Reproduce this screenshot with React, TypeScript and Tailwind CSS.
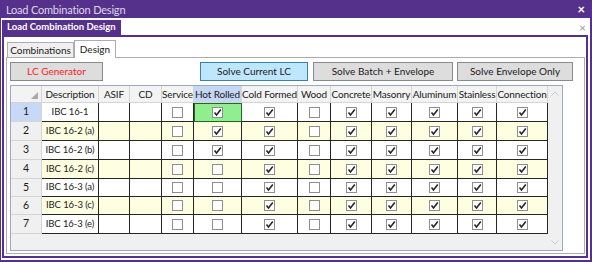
import type { FC, ReactNode } from "react";

const cols = [31, 57, 31, 32, 32, 48, 56, 33, 41, 40, 46, 39, 51];
const headers = [
  "",
  "Description",
  "ASIF",
  "CD",
  "Service",
  "Hot Rolled",
  "Cold Formed",
  "Wood",
  "Concrete",
  "Masonry",
  "Aluminum",
  "Stainless",
  "Connection"
];

interface RowData {
  desc: string;
  hotRolled: boolean;
}

const rows: RowData[] = [
  { desc: "IBC 16-1", hotRolled: true },
  { desc: "IBC 16-2 (a)", hotRolled: true },
  { desc: "IBC 16-2 (b)", hotRolled: true },
  { desc: "IBC 16-2 (c)", hotRolled: false },
  { desc: "IBC 16-3 (a)", hotRolled: false },
  { desc: "IBC 16-3 (c)", hotRolled: false },
  { desc: "IBC 16-3 (e)", hotRolled: false }
];

const rowHeights = [19, 19, 19, 19, 18, 18, 19];

const CheckBox: FC<{ checked: boolean }> = ({ checked }) => (
  <span className="w-[11px] h-[11px] border border-[#8e8e8e] bg-white flex items-center justify-center">
    {checked && (
      <svg width="9" height="9" viewBox="0 0 9 9">
        <path d="M1.5 4.5 L3.5 7 L7.8 1.5" fill="none" stroke="#262626" strokeWidth="1.6" />
      </svg>
    )}
  </span>
);

const Cell: FC<{ width: number; bg: string; children?: ReactNode; extra?: string }> = ({
  width,
  bg,
  children,
  extra = ""
}) => (
  <div
    className={`h-full flex items-center justify-center border-r border-b border-[#262626] ${bg} ${extra}`}
    style={{ width }}
  >
    {children}
  </div>
);

export default function App() {
  return (
    <div
      className="w-[592px] h-[262px] bg-white flex flex-col overflow-hidden text-[#1a1a1a]"
      style={{ fontFamily: 'Lato, "Noto Sans", sans-serif' }}
    >
      {/* title bar */}
      <div className="h-[18px] bg-[#56318b] flex items-center justify-between px-[6px] shrink-0">
        <span className="text-[11px] leading-none text-[#ddd6ea] whitespace-nowrap tracking-[-0.2px]">
          Load Combination Design
        </span>
        <span className="text-[13px] leading-none text-white font-bold mr-[1px]">×</span>
      </div>

      {/* outer frame */}
      <div className="flex-1 flex flex-col border-l border-r-2 border-b-2 border-[#56318b] pl-[1px] pr-[2px] pt-[2px] pb-[2px] min-h-0">
        {/* doc tab strip */}
        <div className="h-[15px] flex items-stretch shrink-0">
          <div className="w-[119px] bg-[#56318b] text-white font-bold text-[9.5px] flex items-center pl-[5px] whitespace-nowrap">
            Load Combination Design
          </div>
          <div className="flex-1 flex justify-end items-center pr-[2px]">
            <span className="text-[12px] text-[#9a9a9a] leading-none">×</span>
          </div>
        </div>

        {/* inner frame */}
        <div className="flex-1 border-2 border-[#56318b] flex flex-col pl-[2px] pr-[1px] pt-[3px] pb-[2px] min-h-0">
          {/* tab headers */}
          <div className="h-[17px] flex items-end shrink-0 pl-[1px] relative z-10 text-[10px]">
            <div className="h-[15px] w-[67px] border border-b-0 border-[#acacac] bg-[#f0f0f0] flex items-center justify-center whitespace-nowrap">
              Combinations
            </div>
            <div className="h-[18px] w-[42px] -mb-[1px] border border-b-0 border-[#acacac] bg-white flex items-center justify-center">
              Design
            </div>
          </div>

          {/* tab panel */}
          <div className="flex-1 border border-[#acacac] bg-white pl-[3px] pt-[4px] min-h-0 flex flex-col">
            <div className="flex h-[19px] text-[10px] shrink-0 whitespace-nowrap">
              <button className="w-[93px] border border-[#8a8a8a] bg-[#dddddd] text-[#ff1a1a] flex items-center justify-center">
                LC Generator
              </button>
              <button className="ml-[97px] w-[108px] border border-[#3c7fb1] bg-[#bee6fd] flex items-center justify-center">
                Solve Current LC
              </button>
              <button className="ml-[5px] w-[140px] border border-[#8a8a8a] bg-[#dddddd] flex items-center justify-center">
                Solve Batch + Envelope
              </button>
              <button className="ml-[4px] w-[116px] border border-[#8a8a8a] bg-[#dddddd] flex items-center justify-center">
                Solve Envelope Only
              </button>
            </div>

            {/* data grid */}
            <div className="mt-[4px] w-[553px] h-[166px] border border-[#98a9c0] bg-[#f0f0f0] flex text-[10px]">
              <div className="w-[537px] flex flex-col">
                <div className="h-[17px] flex">
                  {headers.map((h, i) => (
                    <div
                      key={i}
                      className={`h-full flex items-center justify-center border-r border-b border-[#d5d5d5] whitespace-nowrap tracking-[-0.15px] ${
                        i === 5 ? "bg-[#c6d7f5]" : "bg-[#f3f3f3]"
                      } ${i === 0 ? "relative" : ""}`}
                      style={{ width: cols[i] }}
                    >
                      {i === 0 ? (
                        <svg className="absolute right-[3px] bottom-[3px]" width="7" height="7" viewBox="0 0 7 7">
                          <path d="M7 0 L7 7 L0 7 Z" fill="#a8a8a8" />
                        </svg>
                      ) : (
                        h
                      )}
                    </div>
                  ))}
                </div>
                {rows.map((r, ri) => {
                  const bg = ri % 2 === 1 ? "bg-[#fefee0]" : "bg-white";
                  return (
                    <div key={ri} className="flex" style={{ height: rowHeights[ri] }}>
                      <div
                        className={`h-full flex items-center justify-center border-r border-b border-[#d5d5d5] text-[10.5px] ${
                          ri === 0 ? "bg-[#c8d9f8]" : "bg-[#f0f0f0]"
                        }`}
                        style={{ width: cols[0] }}
                      >
                        {ri + 1}
                      </div>
                      <Cell width={cols[1]} bg={bg}>
                        <span className="whitespace-nowrap text-[9.5px] tracking-[-0.1px]">{r.desc}</span>
                      </Cell>
                      <Cell width={cols[2]} bg={bg} />
                      <Cell width={cols[3]} bg={bg} />
                      <Cell width={cols[4]} bg={bg}>
                        <CheckBox checked={false} />
                      </Cell>
                      {ri === 0 ? (
                        <Cell width={cols[5]} bg="bg-[#90ee90]" extra="outline outline-1 outline-[#1f6b1f] -outline-offset-1">
                          <CheckBox checked={r.hotRolled} />
                        </Cell>
                      ) : (
                        <Cell width={cols[5]} bg={bg}>
                          <CheckBox checked={r.hotRolled} />
                        </Cell>
                      )}
                      <Cell width={cols[6]} bg={bg}>
                        <CheckBox checked />
                      </Cell>
                      <Cell width={cols[7]} bg={bg}>
                        <CheckBox checked={false} />
                      </Cell>
                      {[8, 9, 10, 11, 12].map(c => (
                        <Cell key={c} width={cols[c]} bg={bg}>
                          <CheckBox checked />
                        </Cell>
                      ))}
                    </div>
                  );
                })}
              </div>
              {/* scrollbar */}
              <div className="flex-1 flex flex-col items-center justify-between py-[5px]">
                <svg width="8" height="5" viewBox="0 0 8 5">
                  <path d="M0.5 4.5 L4 1 L7.5 4.5" fill="none" stroke="#c8c8c8" strokeWidth="1" />
                </svg>
                <svg width="8" height="5" viewBox="0 0 8 5">
                  <path d="M0.5 0.5 L4 4 L7.5 0.5" fill="none" stroke="#c8c8c8" strokeWidth="1" />
                </svg>
              </div>
            </div>
          </div>
        </div>
      </div>
    </div>
  );
}
